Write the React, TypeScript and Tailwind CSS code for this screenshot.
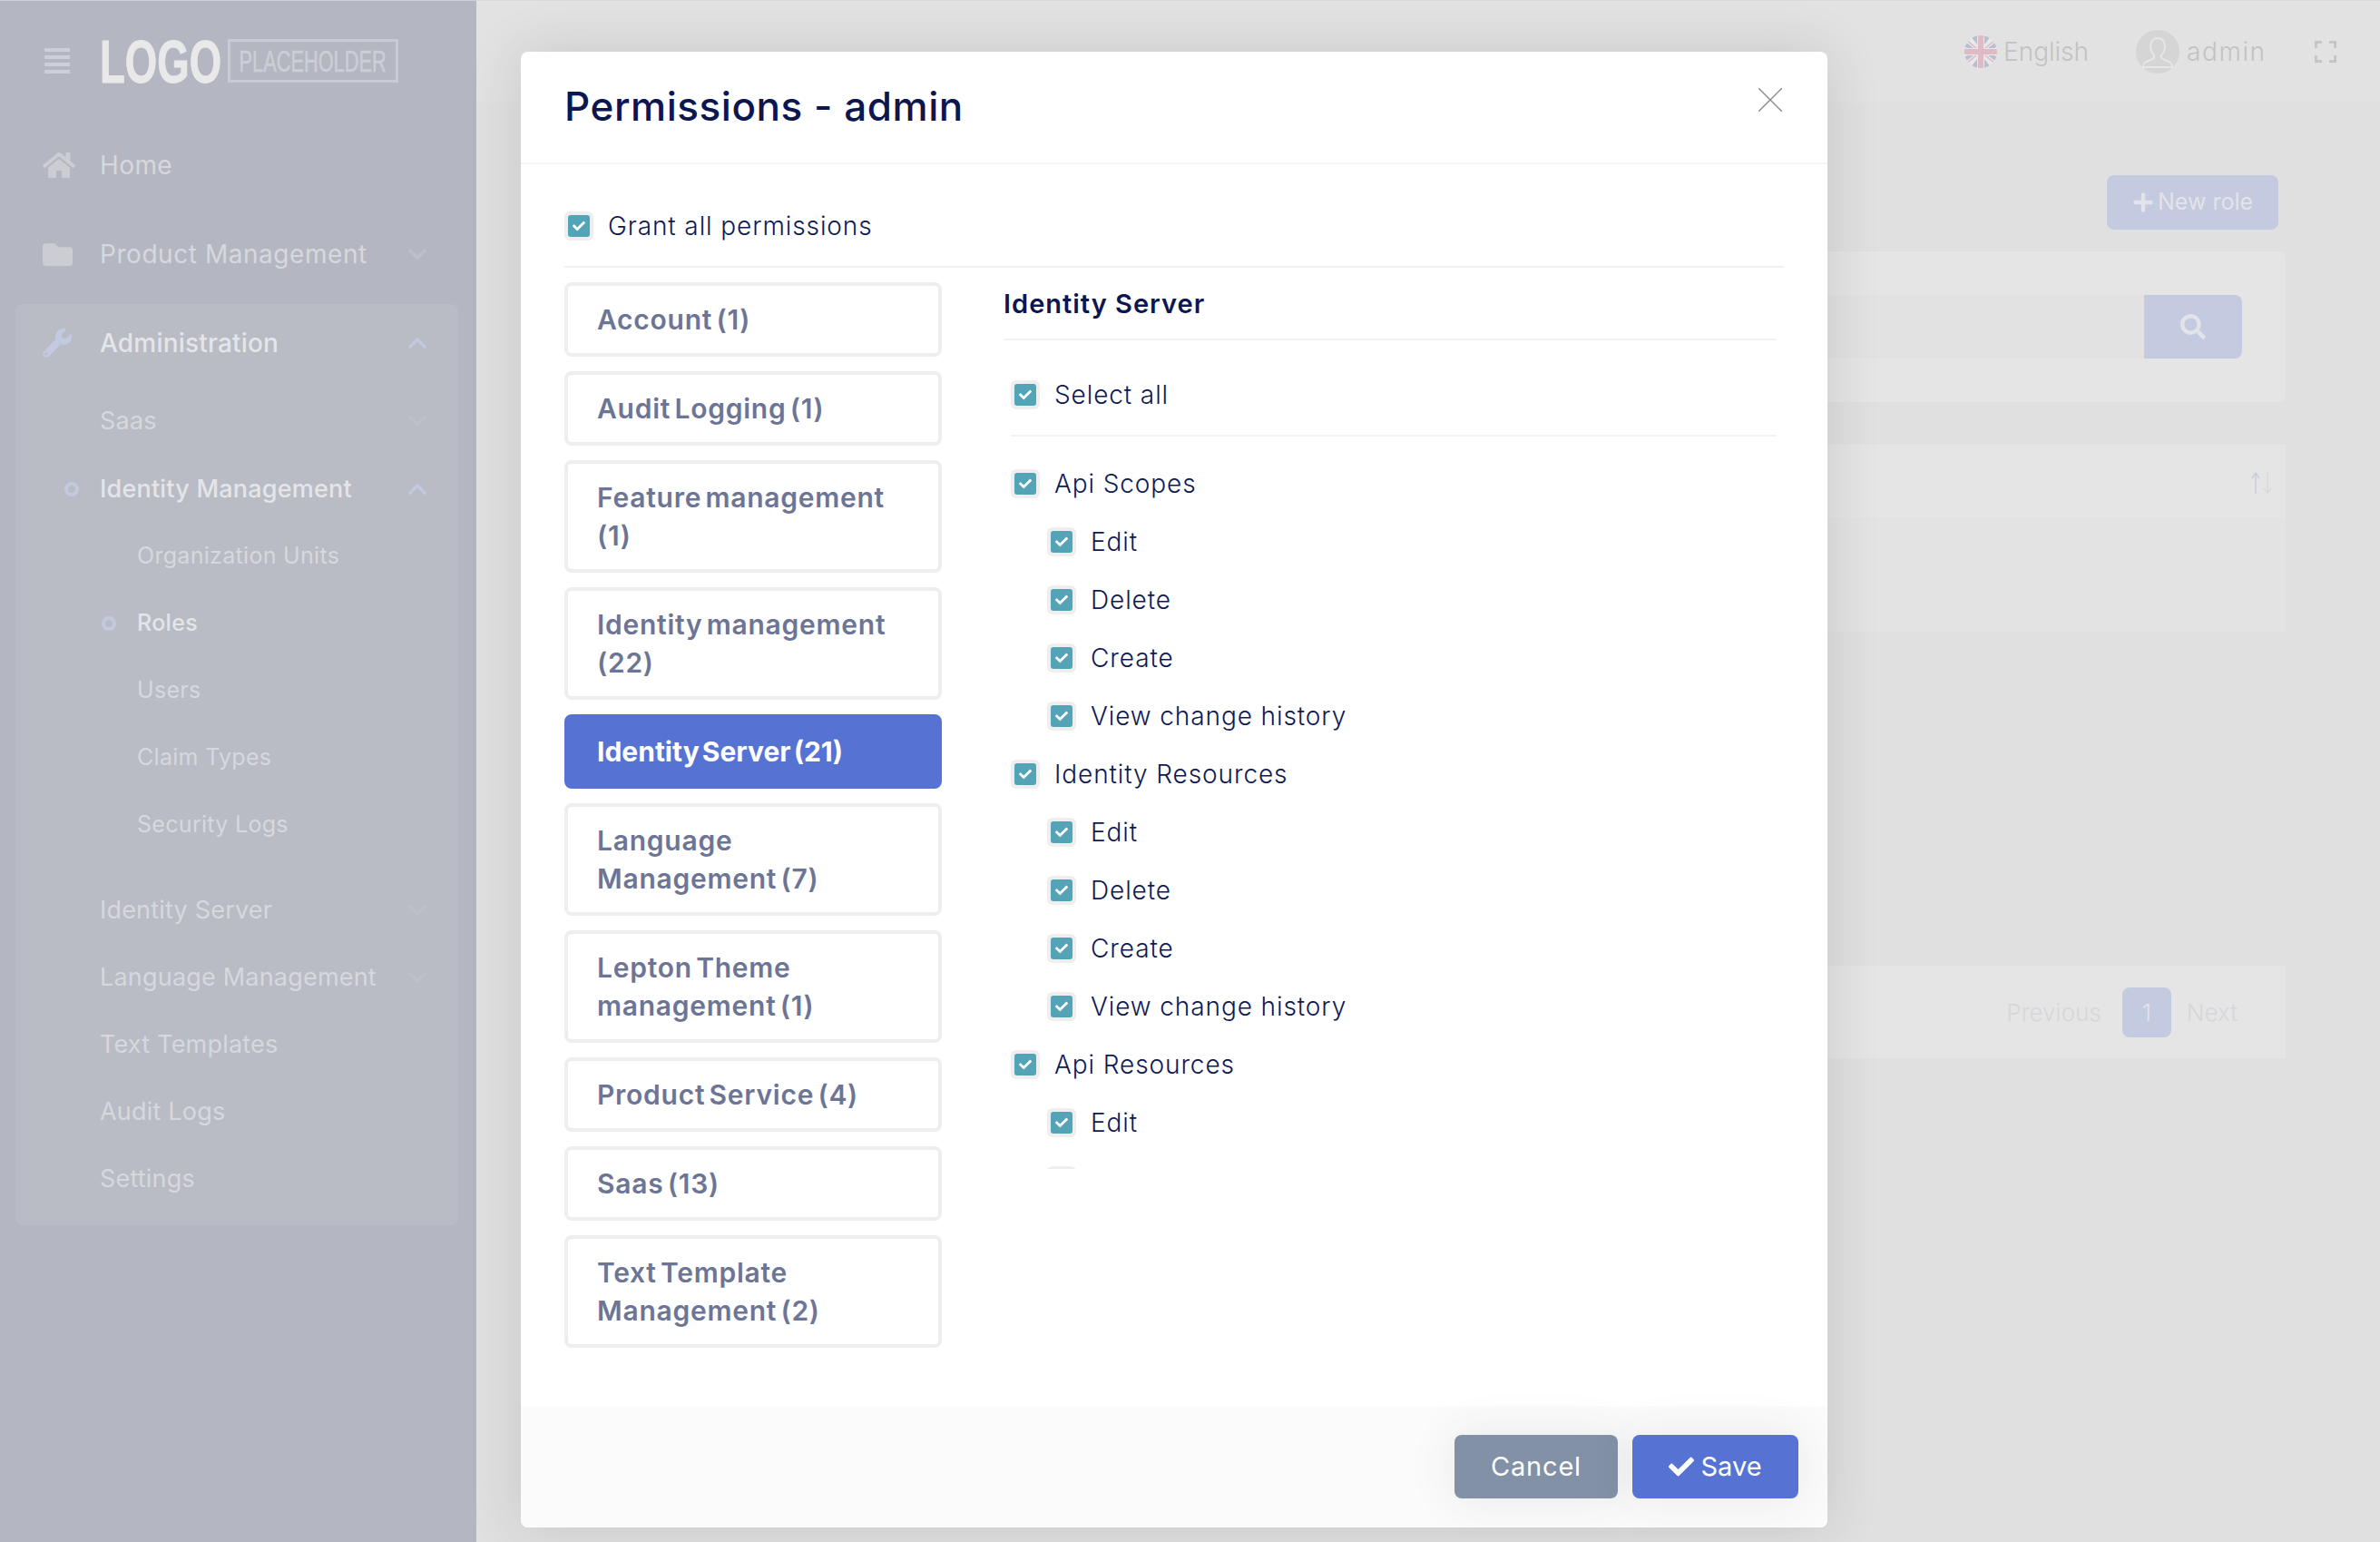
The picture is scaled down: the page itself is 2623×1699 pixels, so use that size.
import { ChevronDown, ChevronUp } from "lucide-react";
import { FaCheck, FaFolder, FaHome, FaPlus, FaSearch, FaWrench } from "react-icons/fa";

const TABS: { lines: string[]; active?: boolean }[] = [
  { lines: ["Account (1)"] },
  { lines: ["Audit Logging (1)"] },
  { lines: ["Feature management", "(1)"] },
  { lines: ["Identity management", "(22)"] },
  { lines: ["Identity Server (21)"], active: true },
  { lines: ["Language", "Management (7)"] },
  { lines: ["Lepton Theme", "management (1)"] },
  { lines: ["Product Service (4)"] },
  { lines: ["Saas (13)"] },
  { lines: ["Text Template", "Management (2)"] },
];

// last row is cut by the scroll area, only the top of its box shows
const PERMISSIONS: { label: string; child?: boolean }[] = [
  { label: "Api Scopes" },
  { label: "Edit", child: true },
  { label: "Delete", child: true },
  { label: "Create", child: true },
  { label: "View change history", child: true },
  { label: "Identity Resources" },
  { label: "Edit", child: true },
  { label: "Delete", child: true },
  { label: "Create", child: true },
  { label: "View change history", child: true },
  { label: "Api Resources" },
  { label: "Edit", child: true },
  { label: "", child: true },
];

function Check({ label }: { label: string }) {
  return (
    <div className="flex h-8 items-center gap-4 text-[28px] font-light leading-8 tracking-[0.9px] text-[#0f1a54]">
      <span className="flex h-8 w-8 shrink-0 items-center justify-center rounded-md bg-[#eeeeee]">
        <span className="flex h-6 w-6 items-center justify-center rounded-[3px] bg-[#52a4b6]">
          <FaCheck className="h-[14px] w-[14px] text-white" />
        </span>
      </span>
      {label}
    </div>
  );
}

function Ring() {
  return <span className="h-4 w-4 rounded-full border-4 border-[#c3c9df]" />;
}

function SubItem({ label, slot, ring, bright, chevron }: { label: string; slot: "top" | "sub"; ring?: boolean; bright?: boolean; chevron?: "up" | "down" }) {
  return (
    <div
      className={`flex h-[74px] items-center pr-[29px] ${slot === "top" ? "text-[27px] tracking-[0.2px]" : "text-[25px] tracking-[0.3px]"} ${bright ? "font-medium text-[#e4e5e9]" : "text-[#d6d8dd]"}`}
    >
      <span className={`flex shrink-0 justify-end pr-[23px] ${slot === "top" ? "w-[93px]" : "w-[134px]"}`}>{ring && <Ring />}</span>
      <span className="flex-1 whitespace-nowrap">{label}</span>
      {chevron === "down" && <ChevronDown strokeWidth={2.5} className="h-8 w-8 text-[#bec0c8]" />}
      {chevron === "up" && <ChevronUp strokeWidth={2.5} className="h-8 w-8 text-[#c3c9df]" />}
    </div>
  );
}

function Sidebar() {
  return (
    <aside className="flex w-[525px] shrink-0 flex-col border-t border-[#cdd0d8] bg-[#b4b7c1]">
      <div className="flex h-[132px] items-center pl-[49px]">
        <div className="flex w-[61px] flex-col gap-[4px]">
          <span className="h-1 w-7 bg-[#cdcfd6]" />
          <span className="h-1 w-7 bg-[#cdcfd6]" />
          <span className="h-1 w-7 bg-[#cdcfd6]" />
          <span className="h-1 w-7 bg-[#cdcfd6]" />
        </div>
        <div className="flex h-12 items-center">
          <span className="w-[141px] origin-left scale-x-[0.68] font-['Liberation_Sans'] text-[67px] font-bold leading-none text-[#e9e9ea] [-webkit-text-stroke:1px_#e9e9ea]">LOGO</span>
          <span className="flex h-12 w-[188px] items-center justify-center overflow-hidden border-[3px] border-[#c9cbd2] font-['Liberation_Sans'] text-[34px] leading-none text-[#ccced5] [-webkit-text-stroke:0.6px_#ccced5]">
            <span className="scale-x-[0.64] whitespace-nowrap">PLACEHOLDER</span>
          </span>
        </div>
      </div>
      <div className="flex h-[98px] items-center pl-[47px] text-[28px] tracking-[0.4px] text-[#d6d8dd]">
        <FaHome className="mr-[27px] h-9 w-9 text-[#cbcdd3]" />
        Home
      </div>
      <div className="flex h-[98px] items-center pl-[47px] pr-[49px] text-[28px] tracking-[0.55px] text-[#d6d8dd]">
        <FaFolder className="mr-[30px] h-[33px] w-[33px] text-[#cbcdd3]" />
        <span className="flex-1">Product Management</span>
        <ChevronDown strokeWidth={2.5} className="h-8 w-8 text-[#bec0c8]" />
      </div>
      <div className="mx-[17px] mt-[6px] w-[488px] rounded-lg bg-[#b9bcc5] pb-[14px]">
        <div className="flex h-[86px] items-center pl-[30px] pr-[29px] text-[28px] font-medium tracking-[0.2px] text-[#e4e5e9]">
          <FaWrench className="mr-[31px] h-8 w-8 text-[#c3c9df]" />
          <span className="flex-1">Administration</span>
          <ChevronUp strokeWidth={2.5} className="h-8 w-8 text-[#c3c9df]" />
        </div>
        <div className="mt-[6px]">
          <SubItem slot="top" label="Saas" chevron="down" />
        </div>
        <div className="mt-px">
          <SubItem slot="top" label="Identity Management" ring bright chevron="up" />
        </div>
        <SubItem slot="sub" label="Organization Units" />
        <SubItem slot="sub" label="Roles" ring bright />
        <SubItem slot="sub" label="Users" />
        <SubItem slot="sub" label="Claim Types" />
        <SubItem slot="sub" label="Security Logs" />
        <div className="mt-5">
          <SubItem slot="top" label="Identity Server" chevron="down" />
        </div>
        <SubItem slot="top" label="Language Management" chevron="down" />
        <SubItem slot="top" label="Text Templates" />
        <SubItem slot="top" label="Audit Logs" />
        <SubItem slot="top" label="Settings" />
      </div>
    </aside>
  );
}

function FlagUk() {
  return (
    <svg viewBox="0 0 36 36" className="h-9 w-9">
      <defs>
        <clipPath id="flagRound">
          <circle cx="18" cy="18" r="18" />
        </clipPath>
      </defs>
      <g clipPath="url(#flagRound)">
        <rect width="36" height="36" fill="#e8e8ea" />
        <path d="M1 7 L10 14 H3 L0 12Z M35 7 L26 14 H33 L36 12Z M1 29 L10 22 H3 L0 24Z M35 29 L26 22 H33 L36 24Z" fill="#b9bfd0" />
        <path d="M7 1 L14 10 V0Z M29 1 L22 10 V0Z M7 35 L14 26 V36Z M29 35 L22 26 V36Z" fill="#b9bfd0" />
        <path d="M1 4 L13 14 M35 4 L23 14 M1 32 L13 22 M35 32 L23 22" stroke="#dfb9c3" strokeWidth="1.5" />
        <rect x="15" width="6" height="36" fill="#dfb9c3" />
        <rect y="15" width="36" height="6" fill="#dfb9c3" />
      </g>
    </svg>
  );
}

function Avatar() {
  return (
    <span className="flex h-12 w-12 items-center justify-center rounded-full bg-[#d5d5d5]">
      <svg viewBox="0 0 48 48" className="h-12 w-12" fill="none" stroke="#e6e6e6" strokeWidth="2">
        <path d="M24 9c-5 0-8 4-8 9 0 4 2 8 4 10v3c-2 2-9 3-11 6-1 1-1 3-1 4h32c0-1 0-3-1-4-2-3-9-4-11-6v-3c2-2 4-6 4-10 0-5-3-9-8-9Z" />
      </svg>
    </span>
  );
}

function Background() {
  return (
    <main className="flex min-w-0 flex-1 flex-col border-t border-[#d6d8e0] bg-[#e0e0e0]">
      <header className="flex h-[112px] items-center justify-end bg-[#e2e2e2] pr-[48px] text-[28px] font-light text-[#c2c2c2]">
        <FlagUk />
        <span className="ml-[7px] w-[146px]">English</span>
        <Avatar />
        <span className="ml-2 w-[141px] tracking-[1.6px]">admin</span>
        <svg viewBox="0 0 24 24" className="h-6 w-6" fill="none" stroke="#c4c4c4" strokeWidth="3.5">
          <path d="M1 8V1h7M16 1h7v7M23 16v7h-7M8 23H1v-7" />
        </svg>
      </header>
      <div className="flex flex-col pl-[60px] pr-[104px]">
        <div className="mt-[80px] flex justify-end pr-2">
          <span className="flex h-[60px] w-[189px] items-center justify-center gap-1 rounded-lg bg-[#c4cadf] text-[25px] text-[#e3e4e9]">
            <FaPlus className="h-6 w-6" />
            New role
          </span>
        </div>
        <section className="mt-6 flex h-[166px] rounded-lg bg-[#e5e5e5] pr-12 pt-12">
          <span className="h-[70px] flex-1 bg-[#e2e2e2]" />
          <span className="flex h-[70px] w-[108px] items-center justify-center rounded-r-lg bg-[#c4cadf]">
            <FaSearch className="h-7 w-7 text-[#e3e4e9]" />
          </span>
        </section>
        <section className="mt-[47px] bg-[#e3e3e3]">
          <div className="flex h-[80px] items-center justify-end bg-[#e5e5e5] pr-[12px]">
            <svg viewBox="0 0 26 26" className="mt-1 h-[26px] w-[26px]" fill="none" strokeWidth="1.5">
              <path d="M5 25V2M1 8l4-6 4 6" stroke="#c9cde0" />
              <path d="M18 1v23M14 19l4 5 4-5" stroke="#d9d9dc" />
            </svg>
          </div>
          <div className="h-[126px]" />
        </section>
        <section className="mt-[368px] flex h-[102px] items-center justify-end bg-[#e5e5e5] pr-[53px] text-[26px] font-light text-[#d6d7da]">
          <span>Previous</span>
          <span className="ml-[23px] mr-[17px] flex h-[55px] w-[54px] items-center justify-center rounded-lg bg-[#c4cadf] text-[#e3e4e9]">1</span>
          <span>Next</span>
        </section>
      </div>
    </main>
  );
}

function Modal() {
  return (
    <div className="absolute left-[574px] top-[57px] flex h-[1626px] w-[1440px] flex-col rounded-lg bg-white shadow-[0_0_60px_rgba(40,40,60,0.14)]">
      <div className="flex h-[124px] items-center justify-between border-b-2 border-[#f6f6f6] pl-12 pr-[50px]">
        <h2 className="-mt-0.5 text-[44px] font-medium tracking-[0.55px] text-[#0c1650]">Permissions - admin</h2>
        <svg viewBox="0 0 26 26" className="-mt-[16px] h-[26px] w-[26px]" stroke="#8a8a8a" strokeWidth="1.4" fill="none">
          <path d="M0 0L26 26M26 0L0 26" />
        </svg>
      </div>
      <div className="flex flex-1 flex-col px-12 pt-[52px]">
        <Check label="Grant all permissions" />
        <div className="mt-7 h-0.5 w-[1344px] bg-[#f1f1f1]" />
        <div className="mt-4 flex gap-[68px]">
          <nav className="flex w-[416px] shrink-0 flex-col gap-4">
            {TABS.map((tab) => (
              <div
                key={tab.lines.join(" ")}
                className={`whitespace-nowrap rounded-lg border-4 px-8 py-4 text-[30px] leading-[42px] [word-spacing:-4px] ${tab.active ? "border-[#5673d3] bg-[#5673d3] font-bold text-white" : "border-[#eeeeee] bg-white font-semibold tracking-[0.75px] text-[#6d7596]"}`}
              >
                {tab.lines.map((line) => (
                  <div key={line}>{line}</div>
                ))}
              </div>
            ))}
          </nav>
          <div className="flex w-[852px] flex-col">
            <div className="flex h-[64px] items-center border-b-2 border-[#f3f3f3] pb-[14px] text-[29px] font-semibold tracking-[1px] text-[#0c1650]">Identity Server</div>
            <div className="ml-2 flex h-[106px] items-center border-b-2 border-[#f3f3f3] pt-4">
              <Check label="Select all" />
            </div>
            <div className="mt-[36px] flex h-[771px] flex-col gap-8 overflow-hidden pl-2">
              {PERMISSIONS.map((row, i) => (
                <div key={i} className={row.child ? "ml-10" : ""}>
                  <Check label={row.label} />
                </div>
              ))}
            </div>
          </div>
        </div>
      </div>
      <div className="flex h-[134px] items-start justify-end gap-4 rounded-b-lg bg-[#fbfbfb] pr-[32px] pt-8">
        <button className="h-[70px] w-[180px] rounded-lg bg-[#8291a6] text-[29px] tracking-[0.8px] text-white shadow-[0_0_50px_rgba(60,60,90,0.1)]">Cancel</button>
        <button className="flex h-[70px] w-[183px] items-center justify-center gap-[7px] rounded-lg bg-[#5673d3] text-[29px] text-white shadow-[0_0_50px_rgba(60,60,90,0.1)]">
          <FaCheck className="h-7 w-7" />
          Save
        </button>
      </div>
    </div>
  );
}

export default function App() {
  return (
    <div className="relative flex h-[1699px] w-[2623px] overflow-hidden font-[Inter,sans-serif]">
      <Sidebar />
      <Background />
      <Modal />
    </div>
  );
}
